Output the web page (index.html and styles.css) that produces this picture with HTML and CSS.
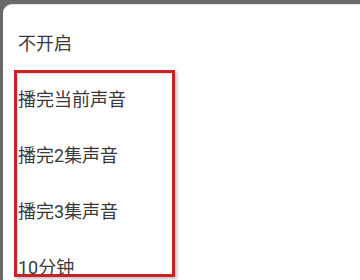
FILE: index.html
```html
<!DOCTYPE html>
<html lang="zh">
<head>
<meta charset="utf-8">
<link rel="stylesheet" href="styles.css">
</head>
<body>
<div class="screen">
  <div class="sheet">
    <ul class="options">
      <li class="option">不开启</li>
      <li class="option">播完当前声音</li>
      <li class="option">播完2集声音</li>
      <li class="option">播完3集声音</li>
      <li class="option">10分钟</li>
    </ul>
  </div>
  <div class="highlight"></div>
</div>
</body>
</html>
```
FILE: styles.css
```css
html, body {
  margin: 0;
  padding: 0;
  width: 360px;
  height: 280px;
  overflow: hidden;
  background: #6a6a6a;
}
.screen {
  position: relative;
  width: 360px;
  height: 280px;
  padding-top: 4px;
  box-sizing: border-box;
  display: flex;
}
.sheet {
  flex: 1;
  margin-left: 3px;
  background: #ffffff;
  border-top-left-radius: 9px;
  border-top: 1px solid #e4e4e4;
  padding-top: 11px;
  overflow: hidden;
  font-family: Roboto, "Noto Sans CJK SC", sans-serif;
}
.options {
  list-style: none;
  margin: 0;
  padding: 0;
}
.option {
  height: 56px;
  line-height: 56px;
  padding-left: 15px;
  font-size: 18px;
  color: #3a3a3a;
}
.highlight {
  position: absolute;
  left: 14px;
  top: 70px;
  width: 155px;
  height: 201px;
  border: 3px solid #cc2027;
  box-shadow: 2px 2px 3px rgba(0, 0, 0, 0.25), inset 1px 1px 2px rgba(0, 0, 0, 0.15);
}
```
